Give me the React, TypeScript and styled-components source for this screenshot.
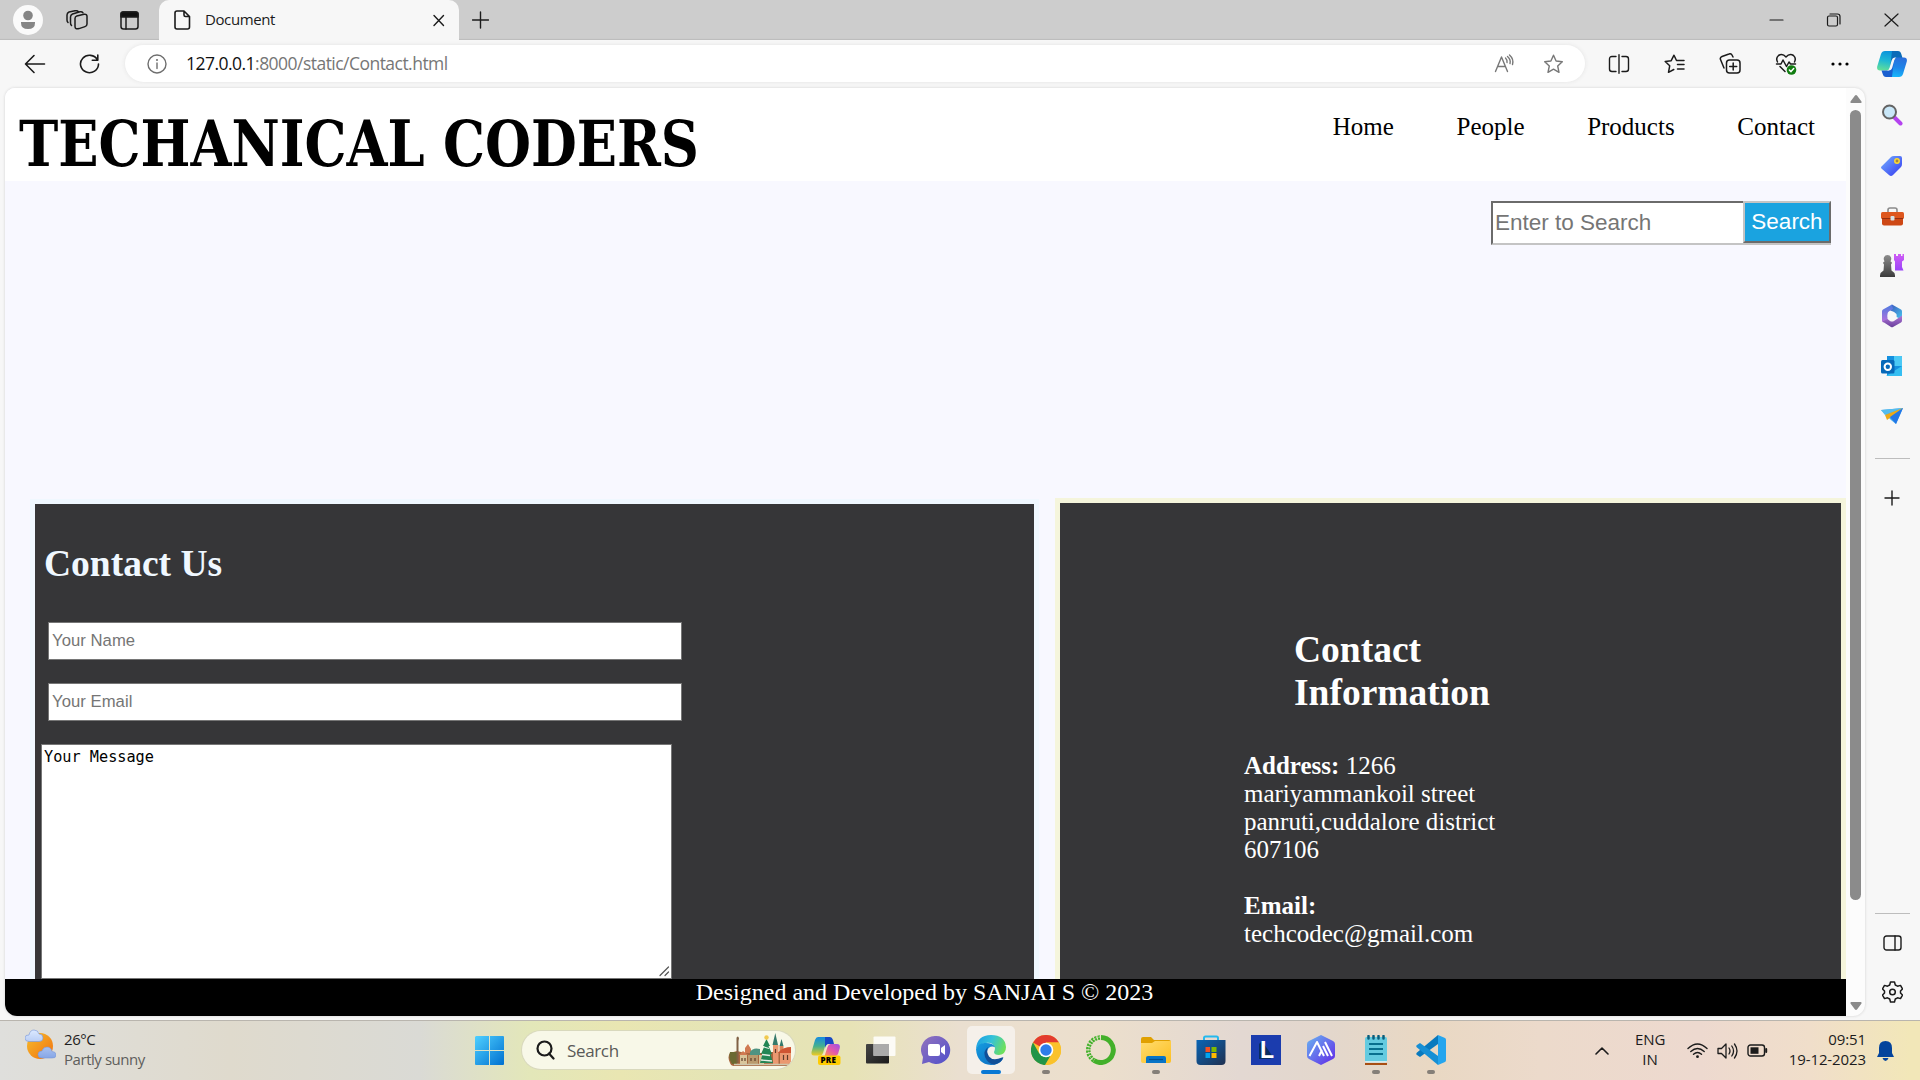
import React from 'react';
import styled, { createGlobalStyle } from 'styled-components';

const Global = createGlobalStyle`
  *, *::before, *::after { box-sizing: border-box; }
  body { margin: 0; overflow: hidden; background: #f7f7f7; }
  svg { display: block; flex: none; }
`;

const ui = `"Open Sans", "Noto Sans", sans-serif`;
const serif = `"Liberation Serif", "Times New Roman", serif`;
const sans = `"Liberation Sans", Arial, sans-serif`;

const Screen = styled.div`
  width: 1920px;
  height: 1080px;
  display: flex;
  flex-direction: column;
  background: #f7f7f7;
  font-family: ${ui};
  overflow: hidden;
`;

const TitleBar = styled.header`
  height: 40px;
  display: flex;
  background: #cdcdcd;
  box-shadow: inset 0 -2px 1px -1px #bcbcbc;
`;
const TitleTools = styled.div`
  width: 159px;
  display: flex;
  align-items: center;
  padding-left: 13px;
`;
const Avatar = styled.span`
  width: 30px;
  height: 30px;
  margin-right: 23px;
  border-radius: 50%;
  background: #fafafa;
  display: flex;
  justify-content: center;
  align-items: center;
`;
const TabActions = styled.span`
  margin-left: 32px;
`;
const Tab = styled.div`
  width: 300px;
  padding: 0 13px 0 15px;
  display: flex;
  align-items: center;
  background: #f7f7f7;
  border-radius: 10px 10px 0 0;
`;
const TabTitle = styled.span`
  flex: 1;
  margin-left: 14px;
  padding-bottom: 2px;
  font-size: 15px;
  letter-spacing: -0.4px;
  color: #1b1b1b;
`;
const NewTab = styled.div`
  padding: 11px 13px;
`;
const WindowButtons = styled.div`
  margin-left: auto;
  display: flex;
  align-items: center;
  gap: 42px;
  padding-right: 21px;
`;

const Toolbar = styled.nav`
  height: 48px;
  display: flex;
  align-items: center;
  padding: 0 12px 1px 23px;
`;
const NavButtons = styled.div`
  width: 102px;
  display: flex;
  align-items: center;
  gap: 32px;
`;
const AddressBar = styled.div`
  width: 1460px;
  height: 37px;
  border-radius: 19px;
  background: #fff;
  box-shadow: 0 0 4px #e3e3e3;
  display: flex;
  align-items: center;
  padding: 0 21px 0 21px;
`;
const Url = styled.div`
  flex: 1;
  margin-left: 18px;
  padding-bottom: 1px;
  font-size: 17.5px;
  letter-spacing: -0.53px;
  color: #767676;
  b { font-weight: 400; color: #111; }
`;
const AddressTools = styled.div`
  display: flex;
  gap: 28px;
`;
const ToolbarTools = styled.div`
  flex: 1;
  display: flex;
  align-items: center;
  gap: 34px;
  padding-left: 23px;
`;
const CopilotSlot = styled.span`
  margin-left: -6px;
`;

const Middle = styled.div`
  height: 932px;
  display: flex;
  padding-left: 5px;
`;
const Viewport = styled.div`
  width: 1860px;
  height: 928px;
  display: flex;
  border-radius: 10px 10px 12px 12px;
  overflow: hidden;
  background: #fcfcfc;
  box-shadow: 0 0 3px #cfcfcf;
`;
const Page = styled.div`
  width: 1841px;
  display: flex;
  flex-direction: column;
  background: #f8f8ff;
  font-family: ${serif};
`;
const SiteHeader = styled.div`
  height: 93px;
  display: flex;
  justify-content: space-between;
  background: #fff;
  padding: 0 31px 0 14px;
`;
const SiteTitle = styled.h1`
  margin: 0;
  padding-top: 11px;
  width: 800px;
  font: 700 64px/90px "DejaVu Serif Condensed", "DejaVu Serif", serif;
  font-stretch: condensed;
  white-space: nowrap;
  transform-origin: 0 50%;
  transform: scaleX(0.917);
  color: #000;
`;
const SiteNav = styled.div`
  display: flex;
  gap: 62.6px;
  padding-top: 25px;
  font-size: 25px;
  line-height: 28px;
  color: #000;
`;
const SearchRow = styled.div`
  height: 317px;
  padding: 20px 15px 0 0;
  display: flex;
  justify-content: flex-end;
`;
const SearchBox = styled.div`
  width: 340px;
  height: 44px;
  display: flex;
  background: #fff;
  border: solid;
  border-width: 2px 0 2px 2px;
  border-color: #6b6b6b #c4c4c4 #c4c4c4 #6b6b6b;
`;
const SearchText = styled.span`
  flex: 1;
  padding-left: 2px;
  font: 22.5px/39px ${sans};
  color: #757575;
`;
const SearchButton = styled.div`
  width: 88px;
  height: 42px;
  margin-top: -2px;
  border: 2px solid;
  border-color: #c4c4c4 #6b6b6b #6b6b6b #c4c4c4;
  background: #1aa3e0;
  color: #fff;
  text-align: center;
  font: 22.5px/37px ${sans};
`;
const Cards = styled.div`
  flex: 1;
  display: flex;
  justify-content: space-between;
  padding-left: 25px;
  overflow: hidden;
`;
const FormCard = styled.section`
  width: 1009px;
  margin-top: 1px;
  border: 5px solid #f0f8ff;
  border-bottom: 0;
  background: #363638;
  padding-left: 6px;
  display: flex;
  flex-direction: column;
`;
const FormTitle = styled.h2`
  margin: 38px 0 37px 3px;
  font-size: 37.5px;
  line-height: 43px;
  color: #f0f8ff;
`;
const Field = styled.div`
  width: 634px;
  height: 38px;
  margin: 0 0 23px 7px;
  padding-left: 3px;
  border: 1px solid #767676;
  background: #fff;
  color: #757575;
  font: 16.67px/35px ${sans};
  letter-spacing: 0.05px;
`;
const MessageArea = styled.div`
  width: 631px;
  height: 235px;
  display: flex;
  justify-content: space-between;
  border: 1px solid #767676;
  background: #fff;
  padding: 2px 1px 1px 2px;
  color: #000;
  font: 15.23px/20px "DejaVu Sans Mono", monospace;
  svg { align-self: flex-end; }
`;
const InfoCard = styled.section`
  width: 791px;
  border: 5px solid #f5f5dc;
  border-bottom: 0;
  background: #363638;
  padding: 125px 0 0 184px;
  color: #fff;
`;
const InfoTitle = styled.h2`
  width: 210px;
  margin: 0 0 38px 50px;
  font-size: 37.5px;
  line-height: 43px;
`;
const InfoText = styled.p`
  width: 270px;
  margin: 0 0 28px;
  font-size: 25px;
  line-height: 28px;
`;
const SiteFooter = styled.footer`
  height: 37px;
  padding-right: 2px;
  background: #000;
  color: #fff;
  text-align: center;
  font-size: 24px;
  line-height: 27px;
`;
const ScrollTrack = styled.div`
  width: 19px;
  display: flex;
  flex-direction: column;
  align-items: center;
  padding: 7px 0 6px;
`;
const ScrollThumb = styled.div`
  width: 11px;
  height: 790px;
  margin: 7px 0 auto;
  border-radius: 6px;
  background: #8b8b8b;
`;

const SideBar = styled.aside`
  width: 55px;
  display: flex;
  flex-direction: column;
  align-items: center;
  padding: 14px 1px 7px 0;
`;
const SideSlot = styled.div<{ $h?: number }>`
  height: ${(p) => p.$h ?? 50}px;
  display: flex;
  align-items: center;
`;
const SideRule = styled.div<{ $push?: boolean }>`
  width: 35px;
  height: 1px;
  margin-top: ${(p) => (p.$push ? 'auto' : '28px')};
  background: #bdbdbd;
`;

const Taskbar = styled.div`
  height: 60px;
  display: flex;
  border-top: 1px solid #b9b5ae;
  background: linear-gradient(90deg, #dfdfdc 0, #dfdacd 230px, #dadad5 420px, #e3e7b9 530px, #e9e6b2 620px,
    #e4e4b6 730px, #e7e3b6 850px, #eadfd0 960px, #ecdfcc 1100px, #e3d8d2 1240px, #e3d7cc 1330px, #e9d8c3 1430px,
    #ecdacb 1540px, #edd9cf 1700px, #f0deca 1810px, #f2e7b8 1910px);
`;
const Weather = styled.div`
  width: 475px;
  padding: 8px 0 0 25px;
  display: flex;
  gap: 8px;
  font-size: 15px;
  line-height: 20px;
  letter-spacing: -0.45px;
  color: #1f1f1f;
  span { display: block; color: #5e5e5c; }
`;
const Launcher = styled.div`
  display: flex;
`;
const SearchPill = styled.div`
  width: 273px;
  height: 38px;
  margin: 10px 3px 0 18px;
  padding: 0 3px 0 13px;
  border-radius: 19px;
  background: #f8f8e8;
  box-shadow: 0 0 0 1px #d9d9bd;
  display: flex;
  align-items: center;
  overflow: hidden;
  span { flex: 1; margin-left: 12px; font-size: 17px; letter-spacing: -0.35px; color: #5a5a57; }
`;
const StartButton = styled.div`
  padding-top: 15px;
`;
const AppSlot = styled.div<{ $active?: boolean }>`
  width: 48px;
  height: 48px;
  margin: 5px 3.5px 0;
  padding-top: 9px;
  display: flex;
  flex-direction: column;
  align-items: center;
  border-radius: 5px;
  background: ${(p) => (p.$active ? '#f5f0ea' : 'transparent')};
`;
const Running = styled.i<{ $active?: boolean }>`
  width: ${(p) => (p.$active ? 20 : 8)}px;
  height: 4px;
  margin-top: 5px;
  border-radius: 2px;
  background: ${(p) => (p.$active ? '#0878d4' : '#857f78')};
`;
const Tray = styled.div`
  margin-left: auto;
  padding-right: 26px;
  display: flex;
  align-items: center;
  color: #1c1c1c;
  font-size: 15px;
  line-height: 20px;
  letter-spacing: -0.1px;
`;
const Language = styled.div`
  width: 30px;
  margin: 0 22px 3px 26px;
  text-align: center;
`;
const TrayIcons = styled.div`
  display: flex;
  align-items: center;
  gap: 9px;
`;
const Clock = styled.div`
  width: 80px;
  margin: 0 11px 4px 18px;
  display: flex;
  flex-direction: column;
  align-items: flex-end;
  white-space: nowrap;
`;

type IconProps = { w?: number; h?: number; vb?: string; c?: string; sw?: number; children: React.ReactNode };
const Line = ({ w = 20, h = 20, vb, c = '#1b1b1b', sw = 1.4, children }: IconProps) => (
  <svg width={w} height={h} viewBox={vb ?? `0 0 ${w} ${h}`} fill="none" stroke={c} strokeWidth={sw} strokeLinecap="round" strokeLinejoin="round">
    {children}
  </svg>
);
const Art = ({ w = 30, h = 30, children }: IconProps) => (
  <svg width={w} height={h} viewBox={`0 0 ${w} ${h}`}>{children}</svg>
);

const Grad = ({ id, a, b, x2 = 1, y2 = 1 }: { id: string; a: string; b: string; x2?: number; y2?: number }) => (
  <linearGradient id={id} x1="0" y1="0" x2={x2} y2={y2}>
    <stop stopColor={a} />
    <stop offset="1" stopColor={b} />
  </linearGradient>
);

const Star = 'M10 1.2 12.6 7l6.2.7-4.6 4.3 1.3 6.3L10 15.1l-5.5 3.2L5.8 12 1.2 7.7 7.4 7z';

const Copilot = () => (
  <Art w={30} h={28}>
    <defs>
      <linearGradient id="cpA" x1="0.5" y1="0" x2="0.3" y2="1"><stop stopColor="#0a93dc" /><stop offset=".5" stopColor="#1fb9d4" /><stop offset="1" stopColor="#62df98" /></linearGradient>
      <linearGradient id="cpB" x1="0.6" y1="0" x2="0.4" y2="1"><stop stopColor="#2a6fdc" /><stop offset=".5" stopColor="#1e85e8" /><stop offset="1" stopColor="#18b8fb" /></linearGradient>
    </defs>
    <path d="M8 1h12l-4 6-3 11q-.8 2.500-3 2.500H3Q-.5 20.500.2 16.500L4 4q1-3 4-3z" fill="url(#cpA)" />
    <path d="M15 1h6q2.500 0 3.300 3L25.500 8h-6q-3.200 0-4.200 3L13 18z" fill="#0b6bb8" />
    <path d="M22 27H10l4-6 3-11q.8-2.500 3-2.500h7q3.500 0 2.800 4L26 24q-1 3-4 3z" fill="url(#cpB)" />
    <path d="M15 27H9q-2.500 0-3.300-3L4.500 20.500h6q2.700 0 3.500-3L17 10z" fill="#1a5fd0" />
    <path d="M19.500 7.500h-1.700q-2.300 0-3.200 3L12.500 18q-.6 2.300-2.500 2.500h1.700q2.800 0 3.600-3L17.300 10q.6-2.300 2.200-2.500z" fill="#f7f7f7" />
  </Art>
);

const App = () => (
  <Screen>
    <Global />
    <TitleBar>
      <TitleTools>
        <Avatar><Art w={16} h={20}><circle cx="8" cy="5.500" r="4.800" fill="#858585" /><path d="M1 12h14v1q0 6-7 6t-7-6z" fill="#858585" /></Art></Avatar>
        <Line w={22} h={20} sw={1.5}>
          <path d="M9 8.500q0-2 1.800-2.500l7.200-1.700q3-.5 3 2v7.700q0 2-2 2.600l-6 2q-4 1-4-2z" />
          <path d="M5.500 15.500Q4.500 14.500 4.500 13V7q0-2.200 2-3l7.500-2.200q2-.5 3 1M2 12.500Q1 11.500 1 10V5q0-2.200 2-3L9 .8q2-.4 3 .5" />
        </Line>
        <TabActions>
          <Line w={19} h={19} sw={1.5}><rect x="1" y="1" width="17" height="17" rx="2.500" /><path d="M1 3q0-2 2-2h13q2 0 2 2v3H1z" fill="#111" /><path d="M6 6v12" /></Line>
        </TabActions>
      </TitleTools>
      <Tab>
        <Line w={17} h={20} sw={1.6}><path d="M3 1h7l5.500 5.500V17q0 2-2 2H3q-2 0-2-2V3q0-2 2-2zM10 1v4q0 1.500 1.500 1.500h4" /></Line>
        <TabTitle>Document</TabTitle>
        <Line w={15} h={14}><path d="m3 2.500 9.500 10M12.500 2.500 3 12.500" /></Line>
      </Tab>
      <NewTab><Line w={17} h={18}><path d="M8.500 1v16M.5 9h16" /></Line></NewTab>
      <WindowButtons>
        <Line w={15} h={14} sw={1.2}><path d="M1 7h13" /></Line>
        <Line w={16} h={14} sw={1.2}><rect x="1.500" y="3" width="10" height="10" rx="1.500" /><path d="M4 1h7.500q2.500 0 2.500 2.500V11" /></Line>
        <Line w={15} h={14} sw={1.2}><path d="m1 1 13 12M14 1 1 13" /></Line>
      </WindowButtons>
    </TitleBar>

    <Toolbar>
      <NavButtons>
        <Line w={23} h={20} sw={1.6}><path d="M11 1.500 2.500 10l8.500 8.500M2.500 10H21.500" /></Line>
        <Line w={22} h={20} sw={1.6}><path d="M19.500 6A9 8.700 0 1 0 20.500 10M19.800 1v5.200h-5.500" /></Line>
      </NavButtons>
      <AddressBar>
        <Line w={22} h={20} c="#6e6e6e"><circle cx="11" cy="10" r="9" /><path d="M11 9v5.500" /><circle cx="11" cy="6" r=".4" /></Line>
        <Url><b>127.0.0.1</b>:8000/static/Contact.html</Url>
        <AddressTools>
          <Line w={21} h={20} c="#777"><path d="M1.500 17.500 7.500 3l6 14.500M3.700 12.500h7.600M11.500 4q2 2 1.500 4.500M13.500 2.500q3.500 3 2.500 7M15.500 1q4.500 4 3 9.500" /></Line>
          <Line w={21} h={20} c="#777" vb="0 0 20 20"><path d={Star} /></Line>
        </AddressTools>
      </AddressBar>
      <ToolbarTools>
        <Line w={22} h={20}><path d="M8 2.500H4q-2.500 0-2.500 2.500v10Q1.500 17.500 4 17.500h4M14 2.500h4q2.500 0 2.500 2.500v10q0 2.500-2.500 2.500h-4M11 .7v18.600" /></Line>
        <Line w={21} h={20} sw={1.5}><path d="M12.500 6.500 10 1.200 7.200 6.700l-6 .8 4.500 4.300-1.200 6.500 5.300-2.800M12.500 6.500h7.500M13.500 10.500h6.500M13.500 15h6.500" /></Line>
        <Line w={22} h={21} sw={1.5}><rect x="7.500" y="7" width="13.500" height="13" rx="3" /><path d="M14.200 10v7M10.700 13.500h7M5 15 1.500 6.500q-.8-2 1.500-3l7-2.500q2-.8 3 1l1 2" /></Line>
        <Line w={22} h={22} sw={1.5}>
          <path d="M2.500 9Q.500 5 3.500 2.500 7.500 0 11 4q3.500-4 7.500-1.500Q21.500 5 19.500 9M1.500 11H6l2-4 3.500 6.500L14 9l1.500 2h5M5 13.500l5 5" />
          <circle cx="16.500" cy="17" r="4.800" fill="#107c10" stroke="none" /><path d="m14.400 17 1.600 1.600 2.700-3" stroke="#fff" />
        </Line>
        <Art w={18} h={6}><circle cx="2" cy="3" r="1.600" /><circle cx="9" cy="3" r="1.600" /><circle cx="16" cy="3" r="1.600" /></Art>
        <CopilotSlot><Copilot /></CopilotSlot>
      </ToolbarTools>
    </Toolbar>

    <Middle>
      <Viewport>
        <Page>
          <SiteHeader>
            <SiteTitle>TECHANICAL CODERS</SiteTitle>
            <SiteNav><span>Home</span><span>People</span><span>Products</span><span>Contact</span></SiteNav>
          </SiteHeader>
          <SearchRow>
            <SearchBox><SearchText>Enter to Search</SearchText><SearchButton>Search</SearchButton></SearchBox>
          </SearchRow>
          <Cards>
            <FormCard>
              <FormTitle>Contact Us</FormTitle>
              <Field>Your Name</Field>
              <Field>Your Email</Field>
              <MessageArea>Your Message<Line w={11} h={11} c="#555" sw={1.2}><path d="M1 9.500 9.500 1M6 9.500 9.500 6" /></Line></MessageArea>
            </FormCard>
            <InfoCard>
              <InfoTitle>Contact Information</InfoTitle>
              <InfoText><b>Address:</b> 1266 mariyammankoil street panruti,cuddalore district 607106</InfoText>
              <InfoText><b>Email:</b><br />techcodec@gmail.com</InfoText>
            </InfoCard>
          </Cards>
          <SiteFooter>Designed and Developed by SANJAI S © 2023</SiteFooter>
        </Page>
        <ScrollTrack>
          <Art w={12} h={8}><path d="M6 0q.7 0 1.200.7L11.500 6.500Q12 8 10.800 8H1.200Q0 8 .5 6.500L4.800.7Q5.300 0 6 0z" fill="#8b8b8b" /></Art>
          <ScrollThumb />
          <Art w={12} h={8}><path d="M6 8q.7 0 1.200-.7L11.500 1.500Q12 0 10.800 0H1.200Q0 0 .5 1.500l4.300 5.800Q5.300 8 6 8z" fill="#8b8b8b" /></Art>
        </ScrollTrack>
      </Viewport>

      <SideBar>
        <Side />
      </SideBar>
    </Middle>

    <Taskbar>
      <Weather>
        <Art w={31} h={30}>
          <defs><Grad id="sun" a="#f5bd2c" b="#f2700f" /><Grad id="cloud" a="#dce9ff" b="#86a6e6" x2={0} /></defs>
          <circle cx="15" cy="17" r="13" fill="url(#sun)" />
          <path d="M4 12.500q-4 0-4-3.500t4-3q1-5 5-5t5 4q4 0 4 4 0 3.500-4 3.500zM17 29q-4 0-4-3.500t4-3.500q1-4 5-4t5 4.500q4 0 4 3.500t-4 3z" fill="url(#cloud)" stroke="#7897d8" strokeWidth=".6" />
        </Art>
        <div>26°C<span>Partly sunny</span></div>
      </Weather>
      <Launcher>
        <StartButton>
          <Art w={29} h={29}><defs><linearGradient id="win" gradientUnits="userSpaceOnUse" x1="0" y1="0" x2="29" y2="29"><stop stopColor="#4fd0ff" /><stop offset="1" stopColor="#0070d0" /></linearGradient></defs><path d="M1 0h13v14H0V1zM15 0h13q1 0 1 1v13H15zM0 15h14v14H1q-1 0-1-1zM15 15h14v13q0 1-1 1H15z" fill="url(#win)" /></Art>
        </StartButton>
        <SearchPill>
          <Line w={20} h={20} sw={2.2}><circle cx="9.500" cy="8.500" r="7" /><path d="m14 13.500 4.500 5" /></Line>
          <span>Search</span>
          <Town />
        </SearchPill>
        <Apps />
      </Launcher>
      <Tray>
        <Line w={14} h={8} sw={1.6}><path d="m1 7 6-6 6 6" /></Line>
        <Language>ENG<br />IN</Language>
        <TrayIcons>
          <Line w={21} h={16}><path d="M1 5.500Q10.500-3.500 20 5.500M3.800 8.500q6.700-6 13.400 0M6.500 11.300q4-3.500 8 0" /><circle cx="10.500" cy="13.700" r="1.400" fill="#1b1b1b" stroke="none" /></Line>
          <Line w={21} h={18} sw={1.3}><path d="M1 6.500h3.500L9 2v14l-4.500-4.500H1zM12 6q2 3 0 6M14.800 4q3.500 5 0 10M17.500 2q5 7 0 14" /></Line>
          <Line w={21} h={13}><rect x="1" y="1" width="16.500" height="11" rx="2.500" /><rect x="3.500" y="3.300" width="8" height="6.500" fill="#1b1b1b" stroke="none" /><path d="M19.200 5v3" strokeWidth="2" /></Line>
        </TrayIcons>
        <Clock><span>09:51</span><span>19-12-2023</span></Clock>
        <Art w={17} h={20}><path d="M8.500 0q6.500 0 6.500 7v5l2 4H0l2-4V7q0-7 6.500-7zM5.500 17h6q-1 3-3 3t-3-3z" fill="#04449c" /></Art>
      </Tray>
    </Taskbar>
  </Screen>
);

const Side = () => (
  <>
    <SideSlot $h={26}><Art w={22} h={22}><path d="m13.500 13.500 6 6" stroke="#b443ef" strokeWidth="4" strokeLinecap="round" /><circle cx="8.500" cy="8" r="6.500" fill="#c9e7f8" stroke="#646464" strokeWidth="2" /></Art></SideSlot>
    <SideSlot $h={76}><Art w={22} h={22}><defs><Grad id="tag" a="#75b2ff" b="#3336f0" /></defs><path d="m1 11 9-9q1-1 3-1h6q2 0 2 2v6q0 2-1 3l-8 8q-2 2-4 0l-7-6q-2-1.500 0-3z" fill="url(#tag)" /><circle cx="16" cy="6" r="2.200" fill="#a7873f" stroke="#ffda30" strokeWidth="1.500" /></Art></SideSlot>
    <SideSlot $h={24}><Art w={23} h={19}><path d="M7 6V3q0-2 2-2h5q2 0 2 2v3" fill="none" stroke="#8b8b8b" strokeWidth="1.600" /><rect x="1" y="10" width="21" height="8.500" rx="2" fill="#ce4815" /><rect x="0" y="5" width="23" height="7" rx="1.500" fill="#de571e" /><path d="M1 11.500h21" stroke="#942f10" /><rect x="9.500" y="9" width="4" height="4.500" rx="1" fill="#d6e1e5" /></Art></SideSlot>
    <SideSlot $h={74}>
      <Art w={24} h={24}>
        <defs><Grad id="rook" a="#d05cf5" b="#9a45f8" x2={0} /><Grad id="pawn" a="#8c8c8c" b="#3c3c3c" x2={0} /></defs>
        <path d="M14 1h2v2h2V1h3v2h1.500V1H24v6l-2 1.500V14l1.500 3.500H15V8.500L14 7z" fill="url(#rook)" />
        <path d="M7.500 2a4 4 0 0 1 3 6.500q2.500 1 .5 3l.5 6q3 1.500 3.500 5v1.500H0v-1.500q.5-3.500 3.500-5l.5-6q-2-2 .5-3A4 4 0 0 1 7.500 2z" fill="url(#pawn)" />
      </Art>
    </SideSlot>
    <SideSlot $h={28}>
      <Art w={22} h={24}>
        <defs><Grad id="mA" a="#3b52b8" b="#47c8f0" /><Grad id="mB" a="#4a7be0" b="#b96fdc" x2={0} /><Grad id="mC" a="#b078d8" b="#6a3f9c" x2={0} /></defs>
        <path d="M11 .5 20 5.500q1 .6 1 2v8L15.500 13V10L8 5.500z" fill="url(#mA)" />
        <path d="M11 .5 2 5.500q-1 .6-1 2v9q0 1.400 1.200 2L6.500 16V10q0-2 2-3L12 5z" fill="url(#mB)" />
        <path d="M1.500 17.500 10 23q1 .5 2 0l8-4.500q1-.6 1-2v-5l-8 5.500q-2 1.200-4 0L6.500 15z" fill="url(#mC)" />
        <circle cx="11" cy="12" r="4.400" fill="#f7f7f7" />
      </Art>
    </SideSlot>
    <SideSlot $h={72}><Art w={22} h={22}><path d="M6 1h14q1 0 1 1v18q0 1-1 1H6z" fill="#1490df" /><path d="M13 1h7q1 0 1 1v9h-8z" fill="#4bc9f5" /><path d="M21 11v9q0 1-1 1H5z" fill="#34bef2" /><rect x="0" y="5" width="13.500" height="13.500" rx="1.500" fill="#0769b9" /><circle cx="6.800" cy="11.700" r="3.200" fill="none" stroke="#fff" strokeWidth="2" /></Art></SideSlot>
    <SideSlot $h={28}><Art w={22} h={18}><path d="M0 3 22 1 15 17l-5-4z" fill="#43a9ed" /><path d="M0 3 22 1 4 8z" fill="#55bced" /><path d="M4 8 22 1 6 13z" fill="#edaa17" /><path d="m9 10 13-9-7 16z" fill="#2377e7" /></Art></SideSlot>
    <SideRule />
    <SideSlot $h={78}><Line w={16} h={16}><path d="M8 1v14M1 8h14" /></Line></SideSlot>
    <SideRule $push />
    <SideSlot $h={57}><Line w={19} h={16}><rect x="1" y="1" width="17" height="14" rx="2.500" /><path d="M12 1v14" /></Line></SideSlot>
    <SideSlot $h={42}><Line w={21} h={22} sw={1.5}><path d="M8.500 1h4l.8 3 2.200 1.200 3-.8 2 3.500-2 2.100v2l2 2.100-2 3.500-3-.8-2.200 1.200-.8 3h-4l-.8-3-2.200-1.200-3 .8-2-3.500 2-2.100v-2l-2-2.100 2-3.500 3 .8L7.700 4z" /><circle cx="10.500" cy="11" r="2.800" /></Line></SideSlot>
  </>
);

const Town = () => (
  <Art w={64} h={34}>
    <path d="M2 30q-3-6 0-10l7-2 8 2h16l8-1h14l7 1v10l-2 3H6q-3 0-4-3z" fill="#a8663f" />
    <path d="M2 19h7v12H4q-4-6-2-12z" fill="#6b6a32" />
    <path d="M8.500 5q0-1.500 1.500-1.500l1 1.500-.5 3v22H8.500z" fill="#806144" />
    <path d="M12 22h7v9h-7zM31 22h5v9h-5z" fill="#d9c59a" />
    <path d="m11 22 4-4 5 4zM17 15l3-4 3 5v4h-6z" fill="#d07a52" />
    <path d="M22 19q3-5 10-3v6H22z" fill="#4f9382" />
    <path d="M20 22h10v9H20z" fill="#b99a6d" />
    <path d="M45 12h5.500v19H45zM52 17h11v12q-1 2-3 2h-8z" fill="#ea9870" />
    <path d="m44.500 12 2.800-12L50 12zM51.500 13 53.500 6l2 7z" fill="#35796b" />
    <path d="M51.500 13h4v5h-4z" fill="#d98358" />
    <path d="M50.500 19q5-5 12.500-5v6H50.500z" fill="#cf5432" />
    <path d="M14 25v3m3-3v3m6-3v3m4-3v3m20.500-12v4m8 2v5m4-5v5" stroke="#5c3b2a" strokeWidth="1.200" />
    <path d="m38.500 6 3.500 7h-1.500l3.500 8h-1.500L45 30H32l2.500-9H33l3.500-8H35z" fill="#238554" />
    <path d="m36 14 5 1.500m-7 6 8 1m-9 4.500 11 1" stroke="#e5eee6" strokeWidth="1.300" />
    <circle cx="38.500" cy="4.500" r="2.200" fill="#f1c94f" />
    <path d="M6 31.500h55" stroke="#cfc6ac" strokeWidth="1.500" />
  </Art>
);

const Pre = styled.text`
  font: 800 8px "Open Sans", "Noto Sans", sans-serif;
  letter-spacing: 0.3px;
`;
const LText = styled.text`
  font: 700 23px "Liberation Sans", Arial, sans-serif;
`;

const Apps = () => (
  <>
    <AppSlot>
      <Art>
        <defs>
          <linearGradient id="pA" x1="0" y1="0" x2="0" y2="1"><stop stopColor="#168ce0" /><stop offset=".5" stopColor="#45b18e" /><stop offset="1" stopColor="#f1cb20" /></linearGradient>
          <linearGradient id="pB" x1="1" y1="0" x2="0" y2="1"><stop stopColor="#9b50e8" /><stop offset=".5" stopColor="#e458aa" /><stop offset="1" stopColor="#ffa045" /></linearGradient>
        </defs>
        <path d="M7 2h11l-3 6-3 10q-1 2.500-3 2.500H3Q0 20.500.5 17L4 5q1-3 3-3z" fill="url(#pA)" />
        <path d="M14 2h5q2 0 3 3l1 4h-5q-3 0-4 4z" fill="#1749c5" />
        <path d="M24 21H12l4-9q1-3 3-3h7q3.500 0 2.800 4L27 19q-1 2-3 2z" fill="url(#pB)" />
        <path d="M18 9h1.500q-2 0-3 3l-3 9H10q2 0 3-3l2-6q1-3 3-3z" fill="#efeac8" />
        <rect x="7" y="20.500" width="22.500" height="9.500" rx="2" fill="#fc0" />
        <Pre x="9.500" y="28.200">PRE</Pre>
      </Art>
    </AppSlot>
    <AppSlot><Art><defs><Grad id="tv" a="#454545" b="#1b1b1b" /></defs><rect x="0" y="9" width="23" height="19.500" rx="1" fill="url(#tv)" /><rect x="7.500" y="1.500" width="22" height="19.500" rx="1" fill="#fff" opacity=".85" /><path d="M7.500 9H23v12H7.500z" fill="#aaa" /></Art></AppSlot>
    <AppSlot><Art><defs><Grad id="chat" a="#9373bd" b="#4f4fcb" /></defs><path d="M15 1a14 14 0 1 1-7 26l-7 2 1-7A14 14 0 0 1 15 1z" fill="url(#chat)" /><rect x="7" y="9" width="12" height="12" rx="2" fill="#fff" /><path d="m20 13 4-3v10l-4-3z" fill="#fff" /></Art></AppSlot>
    <AppSlot $active>
      <Art>
        <defs>
          <linearGradient id="eA" x1="0" y1="0.200" x2="1" y2="0.500"><stop stopColor="#1c9fe4" /><stop offset=".5" stopColor="#35c2d8" /><stop offset="1" stopColor="#6ee05a" /></linearGradient>
          <Grad id="eB" a="#159de0" b="#0c66bd" />
        </defs>
        <path d="M0 14Q1 0 15 0q14 0 15 12 0 7-7 8-5 0-5-3 1-2 1-4-2-6-9-5Q3 9 0 14z" fill="url(#eA)" />
        <path d="M0 14Q3 7 10 8q7 0 9 4-6-2-8 4-1 10 12 9l4-1q-4 6-12 6Q1 29 0 14z" fill="url(#eB)" />
        <path d="M12 12q-5 4-3 10 3 7 9 7.500 6-1 9-6 1-2-1-1-9 4-13-1-3-5-1-9.500z" fill="#104f98" />
      </Art>
      <Running $active />
    </AppSlot>
    <AppSlot>
      <Art><circle cx="15" cy="15" r="15" fill="#fac22b" /><path d="M15 15 2 7.500A15 15 0 0 1 28 7.500H15z" fill="#e33b2e" /><path d="M2 7.500 8.500 19l6.500 3-2 8A15 15 0 0 1 2 7.500z" fill="#229447" /><path d="m8 18 7 4 6-3-6 11h-2z" fill="#229447" /><path d="m21 18-7 12A15 15 0 0 0 28 7.500H15z" fill="#fac22b" /><circle cx="15" cy="15" r="7.300" fill="#fff" /><circle cx="15" cy="15" r="5.700" fill="#2f7de9" /></Art>
      <Running />
    </AppSlot>
    <AppSlot><Art><path d="M15 2.500a12.500 12.500 0 1 1-7 23" stroke="#43b02a" strokeWidth="5" fill="none" /><path d="M14 2.500A12.500 12.500 0 0 0 8 25.500" stroke="#43b02a" strokeWidth="4.500" fill="none" strokeDasharray="2.200 1" /><path d="M14 2A13 13 0 0 0 7 25" stroke="#dfe9cc" fill="none" strokeDasharray="1.500 1.500" /></Art></AppSlot>
    <AppSlot>
      <Art><defs><Grad id="fo" a="#ffdc70" b="#fdbf20" /></defs><path d="M0 4q0-2 2-2h8l3 3h15q2 0 2 2v5H0z" fill="#e0a000" /><path d="M0 8h11l3-2h16v20q0 2-2 2H2q-2 0-2-2z" fill="url(#fo)" /><path d="M5 28v-5q0-2 2-2h16q2 0 2 2v5z" fill="#0874c7" /><path d="M8 24.500h14" stroke="#044f8f" strokeWidth="1.200" /></Art>
      <Running />
    </AppSlot>
    <AppSlot><Art><defs><Grad id="st" a="#0865b5" b="#203050" /></defs><path d="M8 6V3q0-1.500 1.500-1.500h11Q22 1.500 22 3v3" stroke="#25b9ee" strokeWidth="2" fill="none" /><path d="M.5 5h29v21q0 4-4 4h-21q-4 0-4-4z" fill="url(#st)" /><path d="M9.500 12H14v5H9.500z" fill="#f25022" /><path d="M15.500 12h5v5h-5z" fill="#7fba00" /><path d="M9.500 18H14v5H9.500z" fill="#00a4ef" /><path d="M15.500 18h5v5h-5z" fill="#ffb900" /></Art></AppSlot>
    <AppSlot><Art><path d="M0 0h30v30H0z" fill="#1b3cae" /><path d="m11 6-3 3v15h11l3-2z" fill="#092d61" /><LText x="9" y="22.500" fill="#fff">L</LText></Art></AppSlot>
    <AppSlot><Art><defs><Grad id="al" a="#69b5f0" b="#6126e8" /></defs><path d="m15 0 12 6q2 1 2 3v12q0 2-2 3l-12 6-12-6q-2-1-2-3V9q0-2 2-3z" fill="url(#al)" /><path d="m3.500 21 7.500-14 7 14M13 21l3-6M19 7l7 14M17 11l5 10" stroke="#fff" strokeWidth="2" fill="none" strokeLinejoin="round" /></Art></AppSlot>
    <AppSlot>
      <Art><path d="M4 26h22v4H4z" fill="#a84e12" /><rect x="4" y="2" width="22" height="25.500" rx="1.500" fill="#64cbe0" /><path d="M4 27h22" stroke="#f3f7f7" strokeWidth="1.500" /><path d="M8 9h14M8 14h14M8 19h14" stroke="#08708f" strokeWidth="1.800" /><path d="M7.500 1v2.500m5-2.500v2.500m5-2.500v2.500m5-2.500v2.500" stroke="#095d7c" strokeWidth="2.500" strokeLinecap="round" /></Art>
      <Running />
    </AppSlot>
    <AppSlot>
      <Art><path d="m22 0 7 3q1 .5 1 2v20q0 1.500-1 2l-7 3z" fill="#25a5ee" /><path d="M22 0v9L4 22l-3-2q-1.500-1 0-2.500z" fill="#0879be" /><path d="M22 30v-9L4 8l-3 2q-1.500 1 0 2.500z" fill="#168fd5" /></Art>
      <Running />
    </AppSlot>
  </>
);

export default App;
